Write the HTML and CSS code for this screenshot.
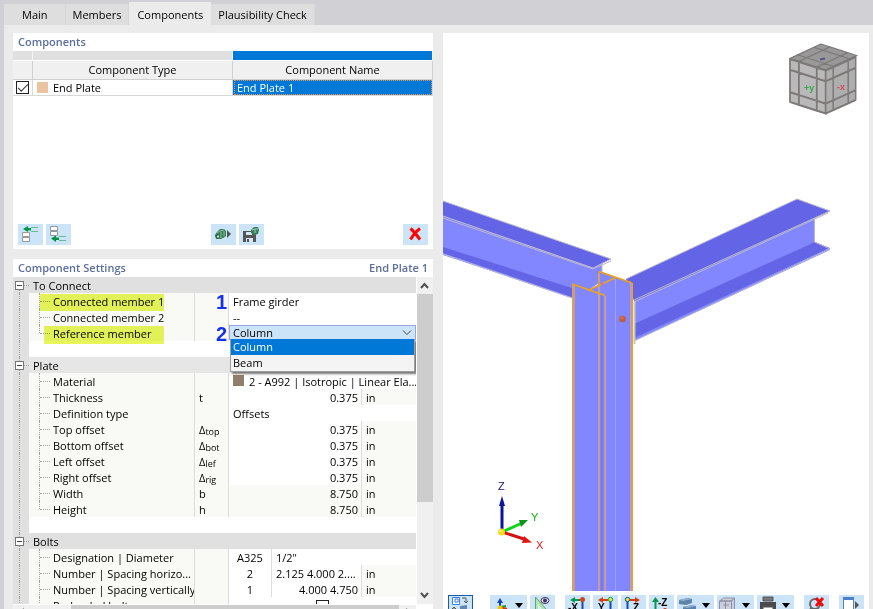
FILE: index.html
```html
<!DOCTYPE html>
<html lang="en">
<head>
<meta charset="utf-8">
<title>Components</title>
<link rel="stylesheet" href="styles.css">
</head>
<body>
<div class="app">
  <nav class="tabs" role="tablist">
    <button class="tab tab-main" role="tab">Main</button>
    <button class="tab" role="tab">Members</button>
    <button class="tab active" role="tab" aria-selected="true">Components</button>
    <button class="tab" role="tab">Plausibility Check</button>
  </nav>
  <main class="page">
    <div class="side">
      <section class="box">
        <h2 class="title">Components</h2>
        <table class="list">
          <colgroup><col class="c-check"><col><col></colgroup>
          <thead>
            <tr class="strip"><td></td><td></td><td class="sel"></td></tr>
            <tr class="heads"><th></th><th>Component Type</th><th>Component Name</th></tr>
          </thead>
          <tbody>
            <tr>
              <td class="check-cell"><input class="check" type="checkbox" checked aria-label="Use End Plate"></td>
              <td><span class="swatch peach"></span>End Plate</td>
              <td class="picked">End Plate 1</td>
            </tr>
          </tbody>
        </table>
        <div class="tools">
          <div class="group">
            <button class="tool" aria-label="Insert before"><svg width="25" height="21" viewBox="0 0 25 21"><path d="M4.500 8.500h7v4h-7zM4.500 13.500h7v4h-7z" fill="#fff" stroke="#999"/><path d="M5 5l5-3v2h3v2.500h-3V8z" fill="#009245"/><path d="M13 3.500h7M13 7.500h7" stroke="#66b990"/></svg></button>
            <button class="tool" aria-label="Insert after"><svg width="25" height="21" viewBox="0 0 25 21"><path d="M4.500 2.500h7v4h-7zM4.500 7.500h7v4h-7z" fill="#fff" stroke="#999"/><path d="M5 14.500l5-3v2h3V16h-3v2z" fill="#009245"/><path d="M13 12.500h7M13 16.500h7" stroke="#66b990"/></svg></button>
          </div>
          <div class="group library">
            <button class="tool" aria-label="Load from library"><svg width="25" height="21" viewBox="0 0 25 21"><path d="M4 11l2-3 3-3 4 0 2 2v5l-3 2-2 1-5 0z" fill="#387e58"/><path d="M6 9l3-2 4-1M10 8v6M13 7v5" stroke="#8cc2a0" fill="none"/><path d="M4 12l3-2 2 2-2 3z" fill="#244c38"/><circle cx="7" cy="12.500" r="1.200" fill="#c5ddd0"/><path d="M16 6l4 4-4 4z" fill="#555"/></svg></button>
            <button class="tool" aria-label="Save to library"><svg width="25" height="21" viewBox="0 0 25 21"><path d="M4 7h11l2 2v9H4z" fill="#555"/><path d="M7 8h6v3H7zM7 14h7v4H7z" fill="#d5e7f4"/><path d="M8 15h2v3H8z" fill="#555"/><path d="M12 6l3-3 4 0 1 3-1 4-4 1-3-2z" fill="#387e58"/><path d="M13 6l3-1 3 0M16 5v4" stroke="#9bcdb0" fill="none"/></svg></button>
          </div>
          <div class="group last">
            <button class="tool" aria-label="Delete"><svg width="25" height="21" viewBox="0 0 25 21"><path d="M7.500 4.500Q11 7.500 17 15.500M17 4.500Q12 8 7.500 15.500" fill="none" stroke="#fe0505" stroke-width="3"/></svg></button>
          </div>
        </div>
      </section>
      <section class="box settings">
        <div class="title-row"><h2 class="title">Component Settings</h2><span class="title">End Plate 1</span></div>
        <div class="scroll-area">
          <div class="rows">
            <table class="props">
              <colgroup><col class="c-gutter"><col class="c-label"><col class="c-symbol"><col class="c-first"><col><col class="c-unit"></colgroup>
              <tbody>
                <tr class="head"><td class="gut first"><button class="fold" aria-label="Collapse To Connect"></button></td><th colspan="5">To Connect</th></tr>
                <tr><td class="gut"></td><td class="label"><span class="marker"></span>Connected member 1</td><td class="sym"><span class="step">1</span></td><td class="val" colspan="3">Frame girder</td></tr>
                <tr><td class="gut"></td><td class="label">Connected member 2</td><td class="sym"></td><td class="val" colspan="3">--</td></tr>
                <tr><td class="gut"></td><td class="label end"><span class="marker short"></span><label for="reference">Reference member</label></td><td class="sym"><span class="step">2</span></td>
                  <td class="val combo" colspan="3"><select id="reference"><option>Column</option><option>Beam</option></select><svg class="caret" width="10" height="6" viewBox="0 0 10 6"><path d="M1 .5l4 4 4-4" fill="none" stroke="#444"/></svg>
                    <ul class="menu"><li class="on">Column</li><li>Beam</li></ul></td></tr>
                <tr class="blank"><td class="gut"></td><td colspan="5"></td></tr>
              </tbody>
              <tbody>
                <tr class="head light"><td class="gut"><button class="fold" aria-label="Collapse Plate"></button></td><th colspan="5">Plate</th></tr>
                <tr><td class="gut"></td><td class="label">Material</td><td class="sym"></td><td class="val" colspan="3"><span class="swatch brown"></span>2 - A992 | Isotropic | Linear Ela...</td></tr>
                <tr><td class="gut"></td><td class="label">Thickness</td><td class="sym">t</td><td class="val num" colspan="2">0.375</td><td class="unit">in</td></tr>
                <tr><td class="gut"></td><td class="label">Definition type</td><td class="sym"></td><td class="val" colspan="3">Offsets</td></tr>
                <tr><td class="gut"></td><td class="label">Top offset</td><td class="sym">Δ<sub>top</sub></td><td class="val num" colspan="2">0.375</td><td class="unit">in</td></tr>
                <tr><td class="gut"></td><td class="label">Bottom offset</td><td class="sym">Δ<sub>bot</sub></td><td class="val num" colspan="2">0.375</td><td class="unit">in</td></tr>
                <tr><td class="gut"></td><td class="label">Left offset</td><td class="sym">Δ<sub>lef</sub></td><td class="val num" colspan="2">0.375</td><td class="unit">in</td></tr>
                <tr><td class="gut"></td><td class="label">Right offset</td><td class="sym">Δ<sub>rig</sub></td><td class="val num" colspan="2">0.375</td><td class="unit">in</td></tr>
                <tr><td class="gut"></td><td class="label">Width</td><td class="sym">b</td><td class="val num fixed" colspan="2">8.750</td><td class="unit">in</td></tr>
                <tr><td class="gut"></td><td class="label end">Height</td><td class="sym">h</td><td class="val num fixed" colspan="2">8.750</td><td class="unit">in</td></tr>
                <tr class="blank"><td class="gut"></td><td colspan="5"></td></tr>
              </tbody>
              <tbody>
                <tr class="head"><td class="gut"><button class="fold" aria-label="Collapse Bolts"></button></td><th colspan="5">Bolts</th></tr>
                <tr><td class="gut"></td><td class="label">Designation | Diameter</td><td class="sym"></td><td class="val mid">A325</td><td class="val" colspan="2">1/2"</td></tr>
                <tr><td class="gut"></td><td class="label">Number | Spacing horizo...</td><td class="sym"></td><td class="val mid">2</td><td class="val">2.125 4.000 2....</td><td class="unit">in</td></tr>
                <tr><td class="gut"></td><td class="label">Number | Spacing vertically</td><td class="sym"></td><td class="val mid">1</td><td class="val num">4.000 4.750</td><td class="unit">in</td></tr>
                <tr><td class="gut"></td><td class="label"><label for="preload">Preloaded bolts</label></td><td class="sym"></td><td class="val mid" colspan="3"><input class="check" id="preload" type="checkbox"></td></tr>
              </tbody>
            </table>
          </div>
          <div class="vbar">
            <svg width="16" height="17" viewBox="0 0 16 17"><path d="M4 11l3.500-4 3.500 4" fill="none" stroke="#505050" stroke-width="2"/></svg>
            <div class="vthumb"></div>
            <svg class="down" width="16" height="17" viewBox="0 0 16 17"><path d="M4 6l3.500 4 3.500-4" fill="none" stroke="#505050" stroke-width="2"/></svg>
          </div>
          <div class="hbar">
            <svg width="17" height="15" viewBox="0 0 17 15"><path d="M11 4l-4 4 4 4" fill="none" stroke="#505050" stroke-width="2"/></svg>
            <div class="hthumb"></div>
            <svg width="17" height="15" viewBox="0 0 17 15"><path d="M7 4l4 4-4 4" fill="none" stroke="#505050" stroke-width="2"/></svg>
          </div>
        </div>
      </section>
    </div>
    <section class="view">
      <svg class="scene" viewBox="443 33 426 558" preserveAspectRatio="xMinYMin slice">
        <defs>
          <g id="face" stroke="#7d7979" stroke-width="5">
            <path d="M0 0H25V25H0zM25 0H75V25H25zM75 0H100V25H75zM0 25H25V77H0zM25 25H75V77H25zM75 25H100V77H75zM0 77H25V100H0zM25 77H75V100H25zM75 77H100V100H75z"/>
          </g>
        </defs>
        <!-- frame girder -->
        <path d="M443 216L592 268 602 264V281L575 299 443 255z" fill="#8287ff"/>
        <path d="M443 247L575 289V298L443 253z" fill="#6465e6"/>
        <path d="M443 201L611 259 593 268 443 216z" fill="#6465e6"/>
        <path d="M443 201L611 259 593 268 443 216M443 218L593 269M593 269L611 261M602 265V279M443 254L575 299" fill="none" stroke="#b7b8cb"/>
        <!-- beam -->
        <path d="M634 300L815 218V244L634 329z" fill="#8287ff"/>
        <path d="M634 324L815 242 830 248 634 339z" fill="#6465e6"/>
        <path d="M634 338L830 248V250L634 341z" fill="#8287ff"/>
        <path d="M626 279L797 199 830 211 634 301z" fill="#6465e6"/>
        <path d="M626 279L797 199 830 211 634 300M634 302L828 213M814.500 219V242L830 249 634 341" fill="none" stroke="#b7b8cb"/>
        <!-- column -->
        <path d="M572 284L590 289 599 285V271L632 283V591H572z" fill="#8287ff"/>
        <path d="M574 285V591M599 273V591M605 296V591M631 283V591" stroke="#c79a9a" stroke-width="2"/>
        <path d="M602 295V591" stroke="#777cf2" stroke-width="3"/>
        <path d="M615.500 279V591" stroke="#a0a1fa"/>
        <path d="M572.500 591V284L605 295.500M599 285V271.500L632.500 283V591M590 289.500L615 278" fill="none" stroke="#e7a321"/>
        <path d="M590 289.500L615 278M572 284L605 295.500M599 271.500L632 283" fill="none" stroke="#e7a321" stroke-width="1.500"/>
        <path d="M601 284h3" stroke="#f05087"/>
        <path d="M634.500 301V344" stroke="#c4c9bb" stroke-width="2"/>
        <circle cx="622.500" cy="319" r="3.300" fill="#bd6038"/><circle cx="622" cy="318" r="1.500" fill="#db713e"/>
        <!-- axes -->
        <path d="M502 532V503" stroke="#0b1399" stroke-width="3"/><path d="M499 506L502 496 505 506z" fill="#0b1399"/>
        <path d="M502 532L521 523.500" stroke="#0bd51b" stroke-width="3"/><path d="M528 520L519 520 521 527z" fill="#0b9619"/>
        <path d="M502 532L524 539" stroke="#d51212" stroke-width="3"/><path d="M532 542.500L524 536 522 543z" fill="#e51212"/>
        <circle cx="501.500" cy="532" r="3.500" fill="#f3dc15"/><circle cx="500.500" cy="531" r="1.200" fill="#fff7a0"/>
        <g class="axis"><text x="498" y="490" fill="#15156f">Z</text><text x="531" y="521" fill="#08b508">Y</text><text x="536" y="549" fill="#ef1515">X</text></g>
        <!-- orientation cube -->
        <g stroke-linejoin="round">
          <use href="#face" fill="#989898" transform="matrix(.357 .115 .31 -.145 790 58.500)"/>
          <use href="#face" fill="#b9b9b9" transform="matrix(.357 .115 0 .43 790 59)"/>
          <use href="#face" fill="#aeaeae" transform="matrix(.3 -.135 0 .43 825.700 70.500)"/>
        </g>
        <path d="M820 59.500l5-1M822 58v2" stroke="#555780" stroke-width="2"/>
        <text class="face-mark" transform="translate(804 91)" fill="#35a84c">+y</text>
        <text class="face-mark" transform="translate(837 90)" fill="#d44b55">-x</text>
      </svg>
      <div class="bar">
        <button class="btn pressed" aria-label="Synchronize view"><svg width="25" height="24" viewBox="0 0 25 24"><path d="M4.500 2.500h7v7h-7z" fill="#fff" stroke="#3d7ce0"/><path d="M7 4h3v3H7z" fill="#fff" stroke="#3d7ce0"/><path d="M14 3h4v5M16 6l2 2 2-2M6 16v-4M4 14l2-2 2 2" fill="none" stroke="#555"/><path d="M12 11l7-1v6h-7z" fill="#6387b4"/></svg></button>
        <button class="btn wide gap-l" aria-label="Axes"><svg width="25" height="24" viewBox="0 0 25 24"><path d="M10 12V5" stroke="#1741b8" stroke-width="2"/><path d="M7 8l3-5 3 5z" fill="#1741b8"/><path d="M10 12l6-1" stroke="#09a83c" stroke-width="2"/><path d="M10 12l7 2" stroke="#df3517" stroke-width="2"/><circle cx="10" cy="13" r="2.500" fill="#edca09"/></svg><i class="drop"></i></button>
        <button class="btn" aria-label="Show dimensions"><svg width="25" height="24" viewBox="0 0 25 24"><path d="M5.500 2v15h13z" fill="#a9ebae" stroke="#6b9e72"/><path d="M8 9v5h4z" fill="#d9eefa"/><ellipse cx="15" cy="5.500" rx="4" ry="3" fill="#e8e6f3" stroke="#35345c"/><circle cx="15" cy="5.500" r="2" fill="#35346c"/></svg></button>
        <button class="btn gap-m" aria-label="View in minus X"><svg width="25" height="24" viewBox="0 0 25 24"><path d="M17.500 5v11" stroke="#174bad" stroke-width="2"/><path d="M5 5l5-3v2h5v2h-5v2z" fill="#069650"/><circle cx="17.500" cy="4.500" r="2.500" fill="#d94118"/><text class="mini" x="3" y="16">-X</text></svg></button>
        <button class="btn" aria-label="View in Y"><svg width="25" height="24" viewBox="0 0 25 24"><path d="M17.500 5v11" stroke="#174bad" stroke-width="2"/><path d="M5 5l5-3v2h5v2h-5v2z" fill="#cf4019"/><circle cx="17.500" cy="4.500" r="2.200" fill="#dce73d" stroke="#12975c"/><text class="mini" x="5" y="16">Y</text></svg></button>
        <button class="btn" aria-label="View in Z"><svg width="25" height="24" viewBox="0 0 25 24"><path d="M6.500 5v11" stroke="#174bad" stroke-width="2"/><path d="M19 5l-5-3v2H9v2h5v2z" fill="#cf4019"/><circle cx="6.500" cy="4.500" r="2.200" fill="#dce73d" stroke="#174bad"/><text class="mini" x="12" y="16">Z</text></svg></button>
        <button class="btn" aria-label="View in minus Z"><svg width="25" height="24" viewBox="0 0 25 24"><path d="M6.500 16V6" stroke="#069650" stroke-width="2"/><path d="M3 7l3.500-5 3.500 5z" fill="#069650"/><circle cx="16" cy="15" r="2" fill="#d94118"/><text class="mini" x="9" y="11">-Z</text></svg></button>
        <button class="btn wide" aria-label="Display mode"><svg width="25" height="24" viewBox="0 0 25 24"><path d="M2 5l9-2 4 1v4l-6 2-7-1z" fill="#5c83ac"/><path d="M2 5l9-2 4 1-9 2z" fill="#93b1cd"/><path d="M6 12l9-2 4 1v6l-9 2-4-1z" fill="#5c83ac"/><path d="M6 12l9-2 4 1-9 2z" fill="#93b1cd"/></svg><i class="drop"></i></button>
        <button class="btn wide" aria-label="Box display"><svg width="25" height="24" viewBox="0 0 25 24"><path d="M2.500 6l4-3h11l-3 3zM2.500 6h12v12h-12zM14.500 6l3-3v12l-3 3M8.500 6v12M6 10h6" fill="#cbd0df" stroke="#8e91a6"/></svg><i class="drop"></i></button>
        <button class="btn wide" aria-label="Print"><svg width="25" height="24" viewBox="0 0 25 24"><path d="M6 2h10v4H6z" fill="#777" stroke="#555"/><path d="M3 7h16v9H3z" fill="#4b4b4e"/><path d="M6 12h10v6H6z" fill="#fff" stroke="#555"/></svg><i class="drop"></i></button>
        <button class="btn gap-m" aria-label="Clear search"><svg width="25" height="24" viewBox="0 0 25 24"><circle cx="11" cy="9" r="5" fill="none" stroke="#666" stroke-width="2"/><path d="M12 3l7 8M19 3l-7 8" stroke="#f00b0b" stroke-width="3"/><path d="M8 13l-3 4" stroke="#666" stroke-width="3"/></svg></button>
        <button class="btn gap-m" aria-label="Dock panel"><svg width="25" height="24" viewBox="0 0 25 24"><path d="M4.500 3.500h10v14h-10z" fill="#fff" stroke="#617fa5"/><path d="M4 2h11v3H4z" fill="#4c80cc"/><path d="M16 6l4 4-4 4z" fill="#555"/></svg></button>
      </div>
    </section>
  </main>
</div>
</body>
</html>
```
FILE: styles.css
```css
* { box-sizing: border-box; }
html, body { height: 100%; margin: 0; overflow: hidden; }
body, button, select, input { font-family: "Open Sans", "Noto Sans", sans-serif; font-size: 11px; color: #000; }
button { border: 0; padding: 0; }
svg { display: block; }

.app { display: flex; flex-direction: column; height: calc(100vh + 10px); background: #d1d0d5; padding-left: 4px; }
.tabs { display: flex; align-items: flex-end; flex: none; height: 25px; }
.tab { height: 21px; padding: 0 7px; background: #dedede; line-height: 21px; border-right: 1px solid #d6d6d8; }
.tab-main { padding: 0 17px 0 18px; }
.tab.active { height: 23px; padding: 2px 8px 0; background: #ebebeb; border: 0; }

.page { flex: 1; min-height: 0; display: grid; grid-template-columns: minmax(0, 420fr) minmax(0, 426fr); gap: 10px; padding: 8px 4px 0 9px; background: #ebebeb; }
.side { display: grid; grid-template-rows: 216px minmax(0, 1fr); gap: 10px; min-height: 0; }
.box { display: flex; flex-direction: column; min-height: 0; background: #fff; }
.title { flex: none; margin: 0; padding: 0 5px; height: 18px; font-size: 11px; font-weight: 600; line-height: 18px; color: #5c6f9d; }
.title-row { display: flex; justify-content: space-between; }

table { border-collapse: separate; border-spacing: 0; table-layout: fixed; width: 100%; }
td, th { padding: 0; font-weight: 400; text-align: left; white-space: nowrap; }
.c-check { width: 20px; }
.list .strip td { height: 10px; background: #e0e0e0; border-bottom: 1px solid #fff; border-right: 1px solid #f4f4f4; }
.list .strip .sel { background: #0078d7; }
.list th { height: 19px; background: #f0f0f0; border-right: 1px solid #d0d0d0; border-bottom: 1px solid #d0d0d0; text-align: center; line-height: 18px; }
.list tbody td { height: 16px; line-height: 15px; border-right: 1px solid #d8d8d8; border-bottom: 1px solid #d8d8d8; padding-left: 4px; }
.list .check-cell { padding-left: 3px; }
.list .picked { position: relative; background: #0078d7; color: #fff; }
.picked::after { content: ""; position: absolute; inset: 0 0 0 1px; border: 1px dotted #e79a58; }
.check { appearance: none; display: block; width: 13px; height: 13px; margin: 0; border: 1px solid #222; background: #fff; }
.check:checked { position: relative; }
.check:checked::after { content: ""; position: absolute; left: 1px; top: 2px; width: 9px; height: 4px; border: solid #333; border-width: 0 0 1px 1px; transform: rotate(-45deg); }
.swatch { display: inline-block; width: 11px; height: 11px; margin-right: 5px; vertical-align: -1px; }
.peach { background: #ecc3a0; }
.brown { background: #8e7e6b; vertical-align: 0; }

.tools { display: flex; margin-top: auto; padding: 0 5px 4px; }
.group { display: flex; gap: 3px; }
.library { margin-left: 140px; }
.last { margin-left: auto; }
.tool { width: 25px; height: 21px; background: #cce4f7; }

.scroll-area { flex: 1; min-height: 0; display: grid; grid-template: minmax(0, 1fr) 15px / minmax(0, 1fr) 16px; column-gap: 1px; }
.rows { overflow: hidden; }
.c-gutter { width: 16px; }
.c-label { width: 165px; }
.c-symbol { width: 34px; }
.c-first { width: 43px; }
.c-unit { width: 55px; }
.props td, .props th { height: 16px; padding-top: 2px; line-height: 14px; overflow: hidden; }
.props .head th { position: relative; padding-left: 4px; background: #e0e0e0; }
.props .light th { background: #e6e6e6; }
.props .gut { position: relative; padding-top: 0; background: #e0e0e0; }
.gut::before { content: ""; position: absolute; left: 6px; top: 0; bottom: 0; border-left: 1px dotted #a0a0a0; }
.gut.first::before { top: 8px; }
.head .gut::after { content: ""; position: absolute; left: 11px; right: 0; top: 8px; border-top: 1px dotted #a0a0a0; }
.fold { position: relative; z-index: 1; display: block; width: 9px; height: 9px; margin-left: 2px; border: 1px solid #777; background: linear-gradient(#444, #444) center / 5px 1px no-repeat #fff; }
.props .label { position: relative; padding-left: 24px; background: #f9faf5; overflow: visible; }
.label::before { content: ""; position: absolute; left: 10px; top: 0; bottom: 0; border-left: 1px dotted #a0a0a0; }
.label.end::before { bottom: 8px; }
.label::after { content: ""; position: absolute; left: 11px; top: 8px; width: 10px; border-top: 1px dotted #a0a0a0; }
.marker { position: absolute; z-index: 2; left: 11px; top: 1px; width: 124px; height: 17px; background: #e8f65a; mix-blend-mode: multiply; }
.marker.short { left: 15px; width: 120px; height: 18px; }
.props .sym { position: relative; padding-left: 4px; background: #f9faf5; border-left: 1px solid #dcdcdc; overflow: visible; }
.sym sub { font-size: 9px; line-height: 0; vertical-align: -1px; }
.step { position: absolute; right: 1px; top: 1px; font: bold 20px/17px "Liberation Sans", sans-serif; color: #1531f0; }
.val { padding-left: 4px; border-left: 1px solid #dcdcdc; background: #fff; }
.num { padding-right: 3px; text-align: right; }
.mid { padding: 0; text-align: center; }
.mid .check { margin: 0 auto; }
.fixed, .unit { background: #f9faf5; }
.unit { padding-left: 4px; border-left: 1px solid #dcdcdc; }
.props .combo { position: relative; padding: 0; overflow: visible; vertical-align: top; }
.combo select { display: block; appearance: none; width: 100%; height: 15px; padding: 0 3px; border: 1px solid #99a5e5; border-radius: 0; background: #cce4f7; line-height: 13px; }
.caret { position: absolute; right: 4px; top: 5px; }
.menu { position: absolute; z-index: 3; left: 1px; right: 1px; top: 14px; margin: 0; padding: 0; list-style: none; background: #f4f4f4; border: 1px solid #a0a0a0; border-top: 0; box-shadow: 2px 2px 2px #777; }
.menu li { height: 16px; padding-left: 2px; line-height: 16px; }
.menu .on { background: #0078d7; color: #fff; }

.vbar { display: flex; flex-direction: column; background: #f0f0f0; }
.vthumb { height: 208px; background: #cdcdcd; }
.down { margin-top: auto; }
.hbar { display: flex; justify-content: space-between; margin-top: 1px; background: #f0f0f0; }
.hthumb { flex: 1; margin-left: 41px; background: #cdcdcd; }

.view { display: flex; flex-direction: column; min-width: 0; min-height: 0; background: #fff; }
.scene { flex: 1; min-height: 0; width: 100%; }
.axis { font: 11px "Liberation Sans", sans-serif; }
.face-mark { font: bold 9px "Liberation Sans", sans-serif; }
.bar { display: flex; flex: none; gap: 3px; height: 28px; padding: 4px 5px 0; }
.btn { display: flex; flex: none; align-items: center; width: 25px; height: 24px; background: #cce4f7; }
.btn svg { flex: none; }
.pressed { outline: 1px solid #1460a8; outline-offset: -1px; }
.wide { width: 37px; }
.gap-m { margin-left: 7px; }
.gap-l { margin-left: 14px; }
.drop { border: 4px solid transparent; border-top: 5px solid #000; border-bottom: 0; margin-top: -4px; }
.mini { font: bold 10px "Liberation Sans", sans-serif; }
```
